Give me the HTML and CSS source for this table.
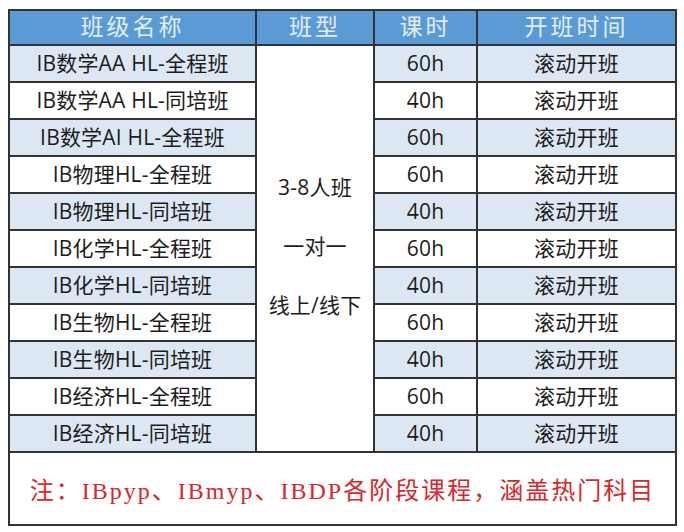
FILE: index.html
```html
<!DOCTYPE html>
<html lang="zh-CN">
<head>
<meta charset="utf-8">
<title>IB课程</title>
<link rel="stylesheet" href="styles.css">
</head>
<body>
<table class="course-table">
  <colgroup>
    <col class="c-name">
    <col class="c-type">
    <col class="c-hours">
    <col class="c-start">
  </colgroup>
  <thead>
    <tr class="head">
      <th>班级名称</th>
      <th>班型</th>
      <th>课时</th>
      <th>开班时间</th>
    </tr>
  </thead>
  <tbody>
    <tr class="odd">
      <td>IB数学AA HL-全程班</td>
      <td class="type" rowspan="11">
        <div class="type-list">
          <span>3-8人班</span>
          <span>一对一</span>
          <span>线上/线下</span>
        </div>
      </td>
      <td>60h</td>
      <td>滚动开班</td>
    </tr>
    <tr class="even"><td>IB数学AA HL-同培班</td><td>40h</td><td>滚动开班</td></tr>
    <tr class="odd"><td>IB数学AI HL-全程班</td><td>60h</td><td>滚动开班</td></tr>
    <tr class="even"><td>IB物理HL-全程班</td><td>60h</td><td>滚动开班</td></tr>
    <tr class="odd"><td>IB物理HL-同培班</td><td>40h</td><td>滚动开班</td></tr>
    <tr class="even"><td>IB化学HL-全程班</td><td>60h</td><td>滚动开班</td></tr>
    <tr class="odd"><td>IB化学HL-同培班</td><td>40h</td><td>滚动开班</td></tr>
    <tr class="even"><td>IB生物HL-全程班</td><td>60h</td><td>滚动开班</td></tr>
    <tr class="odd"><td>IB生物HL-同培班</td><td>40h</td><td>滚动开班</td></tr>
    <tr class="even"><td>IB经济HL-全程班</td><td>60h</td><td>滚动开班</td></tr>
    <tr class="odd"><td>IB经济HL-同培班</td><td>40h</td><td>滚动开班</td></tr>
  </tbody>
  <tfoot>
    <tr>
      <td class="note" colspan="4">注：IBpyp、IBmyp、IBDP各阶段课程，涵盖热门科目</td>
    </tr>
  </tfoot>
</table>
</body>
</html>
```
FILE: styles.css
```css
html, body {
  margin: 0;
  padding: 0;
  background: #ffffff;
}

body {
  padding: 9px 0 0 8px;
  font-family: "Open Sans", "Noto Sans CJK SC", sans-serif;
}

.course-table {
  border-collapse: collapse;
  table-layout: fixed;
  width: 667px;
  border: 2px solid #333;
}

.c-name { width: 247px; }
.c-type { width: 118px; }
.c-hours { width: 103px; }
.c-start { width: 199px; }

.course-table th,
.course-table td {
  border: 2px solid #333;
  padding: 0;
  text-align: center;
  vertical-align: middle;
}

.head th {
  height: 33px;
  background: #5b9bd5;
  color: #e4edf7;
  font-family: "Liberation Serif", "Noto Sans CJK SC", serif;
  font-weight: 400;
  font-size: 23px;
  letter-spacing: 3px;
  line-height: 33px;
}

tbody td {
  height: 35px;
  font-size: 21px;
  letter-spacing: 0.2px;
  line-height: 35px;
  color: #1c1c1c;
}

tbody tr.odd td {
  background: #dde7f3;
}

tbody tr.even td {
  background: #ffffff;
}

tbody tr td.type {
  background: #ffffff;
}

.type-list {
  display: flex;
  flex-direction: column;
  align-items: center;
  gap: 30px;
  padding-bottom: 4px;
  font-size: 21px;
  line-height: 29px;
}

.note {
  height: 71px;
  background: #ffffff;
  color: #d8262c;
  font-family: "Liberation Serif", "Noto Sans CJK SC", serif;
  font-size: 24px;
  letter-spacing: 2px;
  padding: 2px 0 0;
}
```
